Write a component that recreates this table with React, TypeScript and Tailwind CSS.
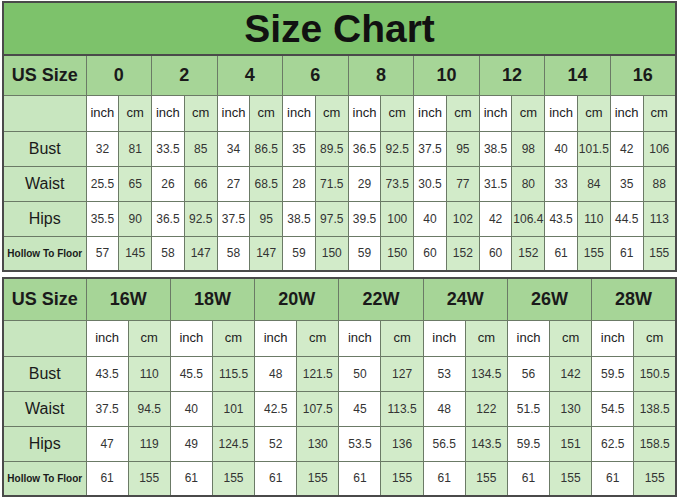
import React from "react";

type Row = { label: string; small?: boolean; values: string[] };

const topSizes = ["0", "2", "4", "6", "8", "10", "12", "14", "16"];
const topRows: Row[] = [
  { label: "Bust", values: ["32", "81", "33.5", "85", "34", "86.5", "35", "89.5", "36.5", "92.5", "37.5", "95", "38.5", "98", "40", "101.5", "42", "106"] },
  { label: "Waist", values: ["25.5", "65", "26", "66", "27", "68.5", "28", "71.5", "29", "73.5", "30.5", "77", "31.5", "80", "33", "84", "35", "88"] },
  { label: "Hips", values: ["35.5", "90", "36.5", "92.5", "37.5", "95", "38.5", "97.5", "39.5", "100", "40", "102", "42", "106.4", "43.5", "110", "44.5", "113"] },
  { label: "Hollow To Floor", small: true, values: ["57", "145", "58", "147", "58", "147", "59", "150", "59", "150", "60", "152", "60", "152", "61", "155", "61", "155"] },
];

const bottomSizes = ["16W", "18W", "20W", "22W", "24W", "26W", "28W"];
const bottomRows: Row[] = [
  { label: "Bust", values: ["43.5", "110", "45.5", "115.5", "48", "121.5", "50", "127", "53", "134.5", "56", "142", "59.5", "150.5"] },
  { label: "Waist", values: ["37.5", "94.5", "40", "101", "42.5", "107.5", "45", "113.5", "48", "122", "51.5", "130", "54.5", "138.5"] },
  { label: "Hips", values: ["47", "119", "49", "124.5", "52", "130", "53.5", "136", "56.5", "143.5", "59.5", "151", "62.5", "158.5"] },
  { label: "Hollow To Floor", small: true, values: ["61", "155", "61", "155", "61", "155", "61", "155", "61", "155", "61", "155", "61", "155"] },
];

const cell = "border border-[#6b7a66] text-center align-middle p-0";

function ChartTable({ sizes, rows, headH, title }: { sizes: string[]; rows: Row[]; headH: string; title?: boolean }) {
  return (
    <table className="w-[675px] table-fixed border-collapse border-2 border-[#4a4a4a]">
      <colgroup>
        <col className="w-[83px]" />
        {sizes.map((s) => (
          <React.Fragment key={s}>
            <col />
            <col />
          </React.Fragment>
        ))}
      </colgroup>
      <tbody>
        {title && (
          <tr className="h-[53px]">
            <td colSpan={sizes.length * 2 + 1} className="border-2 border-[#4a4a4a] bg-[#7dc26b] text-center text-[39px] font-bold leading-none text-[#111]">
              Size Chart
            </td>
          </tr>
        )}
        <tr className={headH}>
          <td className={`${cell} bg-[#a6d597] text-[18px] font-bold text-[#1a1a1a]`}>US Size</td>
          {sizes.map((s) => (
            <td key={s} colSpan={2} className={`${cell} bg-[#a6d597] text-[18px] font-bold text-[#1a1a1a]`}>
              {s}
            </td>
          ))}
        </tr>
        <tr className="h-[36px]">
          <td className={`${cell} bg-[#c8e6bf]`} />
          {sizes.map((s) => (
            <React.Fragment key={s}>
              <td className={`${cell} bg-white text-[13px] text-[#222]`}>inch</td>
              <td className={`${cell} bg-[#d2ebc9] text-[13px] text-[#222]`}>cm</td>
            </React.Fragment>
          ))}
        </tr>
        {rows.map((r) => (
          <tr key={r.label} className="h-[35px]">
            <td
              className={`${cell} bg-[#c8e6bf] text-[#1a1a1a] ${r.small ? "text-[10px] font-bold" : "text-[16px]"}`}
            >
              {r.label}
            </td>
            {r.values.map((v, i) => (
              <td
                key={i}
                className={`${cell} text-[12px] text-[#333] ${i % 2 === 0 ? "bg-white" : "bg-[#d2ebc9]"}`}
              >
                {v}
              </td>
            ))}
          </tr>
        ))}
      </tbody>
    </table>
  );
}

export default function App() {
  return (
    <div className="h-[498px] w-[679px] bg-white pt-[1px] pl-[2px] font-['Liberation_Sans',Arial,sans-serif]">
      <div className="flex flex-col gap-[5px]">
        <ChartTable sizes={topSizes} rows={topRows} headH="h-[40px]" title />
        <ChartTable sizes={bottomSizes} rows={bottomRows} headH="h-[42px]" />
      </div>
    </div>
  );
}
